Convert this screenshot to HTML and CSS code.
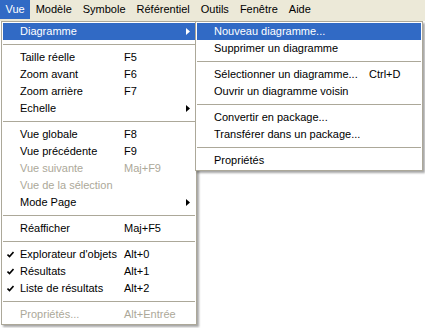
FILE: index.html
```html
<!DOCTYPE html>
<html lang="fr">
<head>
  <meta charset="UTF-8" />
  <title>Vue</title>
  <link rel="stylesheet" href="styles.css">
</head>
<body>
  <div class="app">
    <div class="menubar">
      <span class="mb-item active">Vue</span>
      <span class="mb-item">Modèle</span>
      <span class="mb-item">Symbole</span>
      <span class="mb-item">Référentiel</span>
      <span class="mb-item">Outils</span>
      <span class="mb-item">Fenêtre</span>
      <span class="mb-item">Aide</span>
    </div>
    <div class="workspace"></div>

    <!-- menu Vue -->
    <div class="menu main-menu">
      <div class="item hover"><span></span><span>Diagramme</span><span></span><span class="arrow"><svg width="4" height="7" viewBox="0 0 4 7"><polygon points="0,0 4,3.5 0,7"/></svg></span></div>
      <div class="sep"></div>
      <div class="item"><span></span><span>Taille réelle</span><span>F5</span><span></span></div>
      <div class="item"><span></span><span>Zoom avant</span><span>F6</span><span></span></div>
      <div class="item"><span></span><span>Zoom arrière</span><span>F7</span><span></span></div>
      <div class="item"><span></span><span>Echelle</span><span></span><span class="arrow"><svg width="4" height="7" viewBox="0 0 4 7"><polygon points="0,0 4,3.5 0,7"/></svg></span></div>
      <div class="sep"></div>
      <div class="item"><span></span><span>Vue globale</span><span>F8</span><span></span></div>
      <div class="item"><span></span><span>Vue précédente</span><span>F9</span><span></span></div>
      <div class="item disabled"><span></span><span>Vue suivante</span><span>Maj+F9</span><span></span></div>
      <div class="item disabled"><span></span><span>Vue de la sélection</span><span></span><span></span></div>
      <div class="item"><span></span><span>Mode Page</span><span></span><span class="arrow"><svg width="4" height="7" viewBox="0 0 4 7"><polygon points="0,0 4,3.5 0,7"/></svg></span></div>
      <div class="sep"></div>
      <div class="item"><span></span><span>Réafficher</span><span>Maj+F5</span><span></span></div>
      <div class="sep"></div>
      <div class="item"><span class="check"><svg width="7" height="7" viewBox="0 0 7 7"><path d="M0.5 3.5 L2.5 5.5 L6.5 1"/></svg></span><span>Explorateur d'objets</span><span>Alt+0</span><span></span></div>
      <div class="item"><span class="check"><svg width="7" height="7" viewBox="0 0 7 7"><path d="M0.5 3.5 L2.5 5.5 L6.5 1"/></svg></span><span>Résultats</span><span>Alt+1</span><span></span></div>
      <div class="item"><span class="check"><svg width="7" height="7" viewBox="0 0 7 7"><path d="M0.5 3.5 L2.5 5.5 L6.5 1"/></svg></span><span>Liste de résultats</span><span>Alt+2</span><span></span></div>
      <div class="sep"></div>
      <div class="item disabled"><span></span><span>Propriétés...</span><span>Alt+Entrée</span><span></span></div>

      <!-- sous-menu Diagramme -->
      <div class="menu sub-menu">
        <div class="item hover"><span></span><span>Nouveau diagramme...</span><span></span><span></span></div>
        <div class="item"><span></span><span>Supprimer un diagramme</span><span></span><span></span></div>
        <div class="sep"></div>
        <div class="item"><span></span><span>Sélectionner un diagramme...</span><span>Ctrl+D</span><span></span></div>
        <div class="item"><span></span><span>Ouvrir un diagramme voisin</span><span></span><span></span></div>
        <div class="sep"></div>
        <div class="item"><span></span><span>Convertir en package...</span><span></span><span></span></div>
        <div class="item"><span></span><span>Transférer dans un package...</span><span></span><span></span></div>
        <div class="sep"></div>
        <div class="item"><span></span><span>Propriétés</span><span></span><span></span></div>
      </div>
    </div>
  </div>
</body>
</html>
```

FILE: styles.css
```css
:root {
  --bar-bg: #ece9d8;
  --hl: #316ac5;
  --line: #aca899;
  --disabled: #aca899;
}
body {
  margin: 0;
  background: #fff;
  font-family: "Liberation Sans", Arial, sans-serif;
  font-size: 11px;
  color: #000;
  overflow: hidden;
}
.app {
  position: relative;
  width: 425px;
  height: 328px;
}
/* barre de menus */
.menubar {
  display: flex;
  height: 21px;
  background: var(--bar-bg);
}
.mb-item {
  height: 19px;
  line-height: 19px;
  padding: 0 5.5px;
}
.mb-item.active { background: var(--hl); color: #fff; }
.workspace { height: 307px; background: #fff; }

/* menus deroulants */
.menu {
  position: absolute;
  background: #fff;
  border: 1px solid var(--line);
  padding: 1px;
  box-shadow: 2px 2px 2px rgba(0,0,0,0.35);
}
.main-menu { left: 1px; top: 21px; width: 192px; }
.sub-menu { left: 193px; top: -1px; width: 224px; }

.item {
  display: grid;
  grid-template-columns: 17px 104px 1fr 12px;
  height: 17px;
  line-height: 17px;
  white-space: nowrap;
}
.sub-menu .item { grid-template-columns: 17px 155px 1fr 12px; }
.item.hover { background: var(--hl); color: #fff; }
.item.disabled { color: var(--disabled); }
.sep {
  height: 9px;
  position: relative;
}
.sep::after {
  content: "";
  position: absolute;
  left: 0; right: 0; top: 4px;
  height: 1px;
  background: var(--line);
}
.arrow { display: flex; align-items: center; padding-left: 3px; }
.arrow svg { fill: #000; }
.hover .arrow svg { fill: #fff; }
.check { display: flex; align-items: center; padding-left: 4px; }
.check svg path { fill: none; stroke: #000; stroke-width: 1.6; }
```
